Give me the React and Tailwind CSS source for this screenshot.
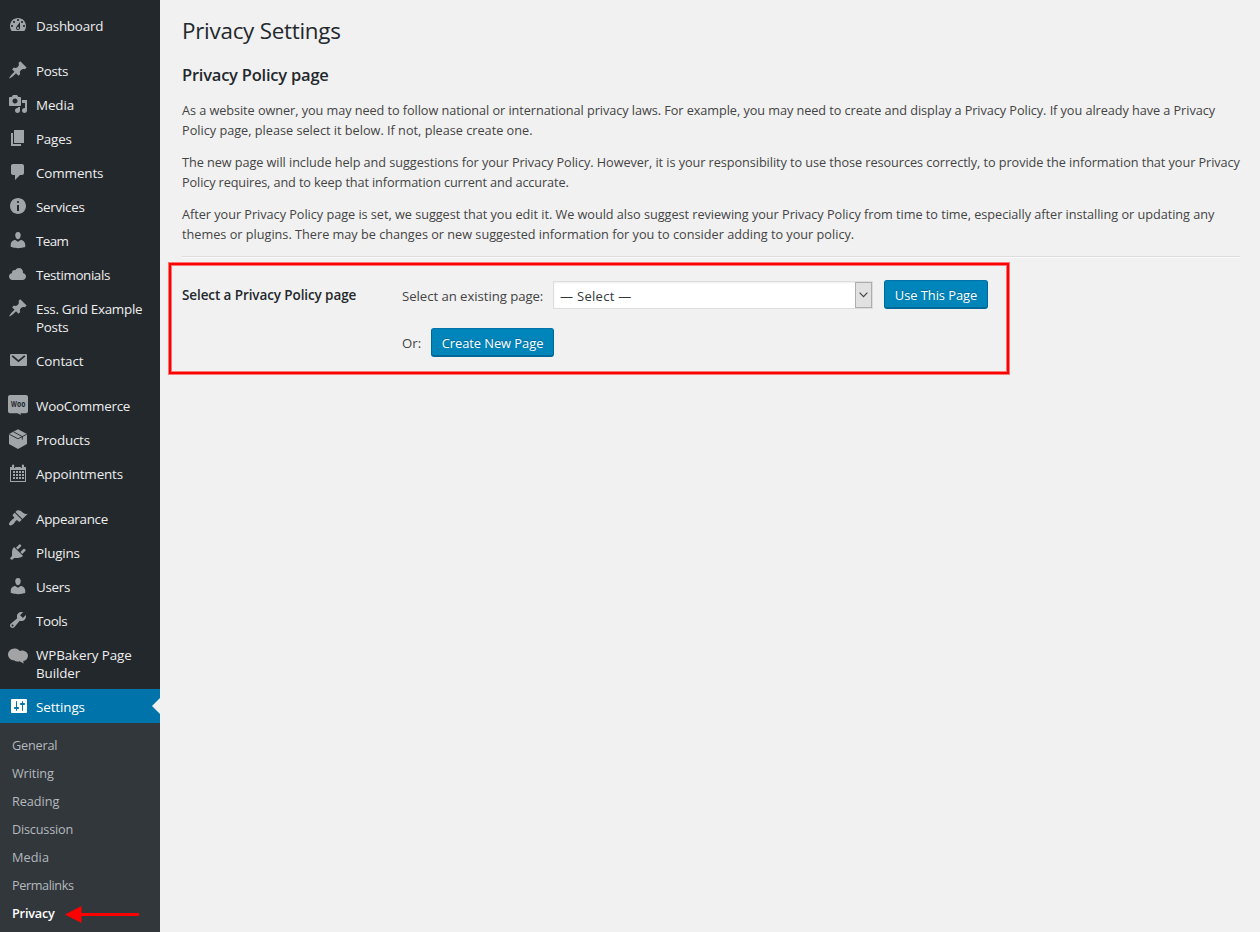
const PIN = "M10.44 3.02l1.82-1.82 6.36 6.35-1.83 1.82c-1.05-.68-2.48-.57-3.41.36l-.75.75c-.92.93-1.04 2.35-.35 3.41l-1.83 1.82-2.41-2.41-2.8 2.79c-.42.42-3.38 2.71-3.8 2.29s1.86-3.39 2.28-3.81l2.79-2.79L4.1 9.36l1.83-1.82c1.05.69 2.48.57 3.4-.36l.75-.75c.93-.92 1.05-2.35.36-3.41z";
const PERSON = "M10 9.25c-2.27 0-2.73-3.44-2.73-3.44C7 4.02 7.82 2 9.97 2c2.16 0 2.98 2.02 2.71 3.81 0 0-.41 3.44-2.68 3.44zm0 2.57L12.72 10c2.39 0 4.52 2.33 4.52 4.53v2.49s-3.65 1.13-7.24 1.13c-3.65 0-7.24-1.13-7.24-1.13v-2.49c0-2.25 1.94-4.48 4.47-4.48z";

const paths = {
  dashboard: "M3.76 16h12.48c1.1-1.37 1.76-3.11 1.76-5 0-4.42-3.58-8-8-8s-8 3.58-8 8c0 1.89.66 3.63 1.76 5zM10 4c.55 0 1 .45 1 1s-.45 1-1 1-1-.45-1-1 .45-1 1-1zM6 6c.55 0 1 .45 1 1s-.45 1-1 1-1-.45-1-1 .45-1 1-1zm8 0c.55 0 1 .45 1 1s-.45 1-1 1-1-.45-1-1 .45-1 1-1zm-5.37 5.55L12 7v6c0 1.1-.9 2-2 2s-2-.9-2-2c0-.57.24-1.08.63-1.45zM4 10c.55 0 1 .45 1 1s-.45 1-1 1-1-.45-1-1 .45-1 1-1zm12 0c.55 0 1 .45 1 1s-.45 1-1 1-1-.45-1-1 .45-1 1-1zm-5 3c0-.55-.45-1-1-1s-1 .45-1 1 .45 1 1 1 1-.45 1-1z",
  pin: PIN,
  media: "M13 11V4c0-.55-.45-1-1-1h-1.67L9 1H5L3.67 3H2c-.55 0-1 .45-1 1v7c0 .55.45 1 1 1h10c.55 0 1-.45 1-1zM7 4.5c1.38 0 2.5 1.12 2.5 2.5S8.38 9.5 7 9.5 4.5 8.38 4.5 7 5.62 4.5 7 4.5zM14 6h5v10.5c0 1.38-1.12 2.5-2.5 2.5S14 17.88 14 16.5s1.12-2.5 2.5-2.5c.17 0 .34.02.5.05V9h-3V6zm-4 8.05V13h2v3.5c0 1.38-1.12 2.5-2.5 2.5S7 17.88 7 16.5 8.12 14 9.5 14c.17 0 .34.02.5.05z",
  page: "M6 15V2h10v13H6zm-1 1h8v2H3V5h2v11z",
  comment: "M5 2h9c1.1 0 2 .9 2 2v7c0 1.1-.9 2-2 2h-2l-5 5v-5H5c-1.1 0-2-.9-2-2V4c0-1.1.9-2 2-2z",
  info: "M10 2c4.42 0 8 3.58 8 8s-3.58 8-8 8-8-3.58-8-8 3.58-8 8-8zm1 4c0-.55-.45-1-1-1s-1 .45-1 1 .45 1 1 1 1-.45 1-1zm0 9V9H9v6h2z",
  person: PERSON,
  cloud: "M14.9 9c1.8.2 3.1 1.7 3.1 3.5 0 1.9-1.6 3.5-3.5 3.5h-10C2.6 16 1 14.4 1 12.5 1 10.7 2.3 9.3 4.1 9 4 8.9 4 8.7 4 8.5 4 7.1 5.1 6 6.5 6c.3 0 .7.1.9.2C8.1 4.9 9.4 4 11 4c2.2 0 4 1.8 4 4 0 .4-.1.7-.1 1z",
  brush: "M14.48 11.06L7.41 3.99l1.5-1.5c.5-.56 2.3-.47 3.51.32 1.21.8 1.43 1.28 2.91 2.1 1.18.64 2.45 1.26 4.45.85zm-.71.71L6.7 4.7 4.93 6.47c-.39.39-.39 1.02 0 1.41l1.06 1.06c.39.39.39 1.03 0 1.42-.6.6-1.43 1.11-2.21 1.69-.35.26-.7.53-1.01.84C1.43 14.23.4 16.08 1.4 17.07c.99 1 2.84-.03 4.18-1.36.31-.31.58-.66.85-1.02.57-.78 1.08-1.61 1.69-2.21.39-.39 1.02-.39 1.41 0l1.06 1.06c.39.39 1.02.39 1.41 0z",
  plug: "M13.11 4.36L9.87 7.6 8 5.73l3.24-3.24c.35-.34 1.05-.2 1.56.32.52.51.66 1.21.31 1.55zm-8 1.77l.91-1.12 9.01 9.01-1.19.84c-.71.71-2.63 1.16-3.82 1.16H6.14L4.9 17.26c-.59.59-1.54.59-2.12 0-.59-.58-.59-1.53 0-2.12l1.24-1.24v-3.88c0-1.13.4-3.19 1.09-3.89zm7.26 3.97l3.24-3.24c.34-.35 1.04-.21 1.55.31.52.51.66 1.21.31 1.55l-3.24 3.25z",
  wrench: "M16.68 9.77c-1.34 1.34-3.3 1.67-4.95.99l-5.41 6.52c-.99.99-2.59.99-3.58 0s-.99-2.59 0-3.57l6.52-5.42c-.68-1.65-.35-3.61.99-4.95 1.28-1.28 3.12-1.62 4.72-1.06l-2.89 2.89 2.82 2.82 2.86-2.87c.53 1.58.18 3.39-1.08 4.65zM3.81 16.21c.4.39 1.04.39 1.43 0 .4-.4.4-1.04 0-1.43-.39-.4-1.03-.4-1.43 0-.39.39-.39 1.03 0 1.43z",
  settings: "M18 16V4c0-.55-.45-1-1-1H3c-.55 0-1 .45-1 1v12c0 .55.45 1 1 1h14c.55 0 1-.45 1-1zM8 11h1c.55 0 1 .45 1 1s-.45 1-1 1H8v1.5c0 .28-.22.5-.5.5s-.5-.22-.5-.5V13H6c-.55 0-1-.45-1-1s.45-1 1-1h1V5.5c0-.28.22-.5.5-.5s.5.22.5.5V11zm5-2h-1c-.55 0-1-.45-1-1s.45-1 1-1h1V5.5c0-.28.22-.5.5-.5s.5.22.5.5V7h1c.55 0 1 .45 1 1s-.45 1-1 1h-1v5.5c0 .28-.22.5-.5.5s-.5-.22-.5-.5V9z",
};

function Drawing({ name }) {
  if (name === "mail")
    return (
      <>
        <rect x="2" y="4" width="17" height="12" rx="1.2" />
        <path d="M4.2 5.8l6.3 5.4 6.3-5.4" fill="none" stroke="#23282d" strokeWidth="1.7" />
      </>
    );
  if (name === "woo")
    return (
      <>
        <path d="M2 0h16a2 2 0 0 1 2 2v14.200a2 2 0 0 1-2 2h-5.500l.5 1.800-3.500-1.800H2a2 2 0 0 1-2-2V2a2 2 0 0 1 2-2z" />
        <text x="3" y="11.700" fontSize="8" fontWeight="700" fill="#23282d" textLength="5.800" lengthAdjust="spacingAndGlyphs" className="font-['Open_Sans',sans-serif]">W</text>
        <text x="9" y="11.700" fontSize="9.200" fontWeight="700" fill="#23282d" textLength="8.400" lengthAdjust="spacingAndGlyphs" className="font-['Open_Sans',sans-serif]">oo</text>
      </>
    );
  if (name === "box")
    return (
      <>
        <path d="M10 .3l9 4.700v10.100L10 19.900l-9-4.800V5z" />
        <path d="M1.200 5.200L10 9.800l8.800-4.600M5.600 2.900l8.700 4.700v3" fill="none" stroke="#23282d" strokeWidth=".9" />
      </>
    );
  if (name === "calendar")
    return (
      <>
        <path fillRule="evenodd" d="M2 4h2V2.500a1.100 1.100 0 0 1 2.200 0V5h1V4h5.600v1h1V2.500a1.100 1.100 0 0 1 2.200 0V4h2v15H2zM3 7v11h14V7z" />
        <path d="M5 8h2v2H5zm3 0h2v2H8zm3 0h2v2h-2zm3 0h2v2h-2zM5 11h2v2H5zm3 0h2v2H8zm3 0h2v2h-2zm3 0h2v2h-2zM5 14h2v2H5zm3 0h2v2H8zm3 0h2v2h-2zm3 0h2v2h-2z" />
      </>
    );
  if (name === "bakery")
    return <path fill="#a2a3a4" transform="translate(0 1.900)" d="M6.500 2.600c2.300-.2 4.200.8 5.200 2.500 1-.6 2.500-.7 4-.3 2.500.6 4.300 2.500 4.300 5 0 2.600-1.900 4.900-4.700 5.200l.3 2.700-4-2.300c-.8.400-1.500.5-2.500.3-1.100-.1-1.900-.4-2.600-1.100C3 14.600 0 12 0 8.700c0-3.400 3-5.900 6.500-6.100z" />;
  return <path d={paths[name]} fillRule={name === "dashboard" ? "evenodd" : "nonzero"} />;
}

const groups = [
  [["dashboard", ["Dashboard"], "tracking-[-0.22px]"]],
  [
    ["pin", ["Posts"], "tracking-[-0.3px]"],
    ["media", ["Media"], "tracking-[-0.1px]"],
    ["page", ["Pages"], "tracking-[-0.2px]"],
    ["comment", ["Comments"], "tracking-[-0.1px]"],
    ["info", ["Services"], "tracking-[-0.27px]"],
    ["person", ["Team"], "tracking-[-0.6px]"],
    ["cloud", ["Testimonials"], "tracking-[-0.4px]"],
    ["pin", ["Ess. Grid Example", "Posts"], "tracking-[-0.27px]"],
    ["mail", ["Contact"], "tracking-[-0.1px]"],
  ],
  [
    ["woo", ["WooCommerce"], "tracking-[-0.23px]"],
    ["box", ["Products"], "tracking-[-0.22px]"],
    ["calendar", ["Appointments"], "tracking-[-0.13px]"],
  ],
  [
    ["brush", ["Appearance"], "tracking-[-0.3px]"],
    ["plug", ["Plugins"], "tracking-[-0.15px]"],
    ["person", ["Users"], "tracking-[-0.3px]"],
    ["wrench", ["Tools"], "tracking-[-0.4px]"],
    ["bakery", ["WPBakery Page", "Builder"], "tracking-[-0.1px]"],
  ],
];

function Icon({ name }) {
  return (
    <svg viewBox="0 0 20 20" fill="currentColor" className="h-5 w-5 shrink-0 overflow-visible">
      <Drawing name={name} />
    </svg>
  );
}

function MenuItem({ icon, lines, tracking }) {
  return (
    <a className="flex gap-2 pt-1.5 pb-2 pl-2 text-[#a0a5aa]">
      <Icon name={icon} />
      <span className={"-mb-px pt-0.5 text-[13.4px] leading-[18px] text-[#eeeeee] " + tracking}>
        {lines.map((l) => (
          <span key={l} className="block whitespace-nowrap">{l}</span>
        ))}
      </span>
    </a>
  );
}

const submenu = [
  ["General", "tracking-[-0.2px]"],
  ["Writing", "tracking-[-0.1px]"],
  ["Reading", "tracking-[-0.05px]"],
  ["Discussion", "tracking-[-0.2px]"],
  ["Media", "tracking-[0.1px]"],
  ["Permalinks", "tracking-[-0.4px]"],
];

function Sidebar() {
  return (
    <nav className="flex w-40 shrink-0 flex-col bg-[#23282d] pt-[9px]">
      {groups.map((g, i) => (
        <div key={i} className={i < 3 ? "mb-[11px] flex flex-col" : "flex flex-col"}>
          {g.map(([icon, lines, tracking], j) => (
            <div key={j} className={lines.length > 1 ? (icon === "bakery" ? "h-[51px]" : "h-[52px]") : "h-[34px]"}>
              <MenuItem icon={icon} lines={lines} tracking={tracking} />
            </div>
          ))}
        </div>
      ))}
      <div className="relative flex h-[34px] gap-[7px] bg-[#0073aa] pt-[7px] pl-[9px] text-white">
        <Icon name="settings" />
        <span className="pt-[2px] text-[13.4px] leading-[18px] tracking-[-0.1px]">Settings</span>
        <svg viewBox="0 0 8 16" className="absolute top-[9px] right-0 h-4 w-2"><path d="M8 0v16L0 8z" fill="#f1f1f1" /></svg>
      </div>
      <div className="flex grow flex-col bg-[#32373c] pt-2 pl-3 text-[12.7px] text-[#b4b9be]">
        {submenu.map(([t, tracking]) => (
          <a key={t} className={"h-7 leading-7 " + tracking}>{t}</a>
        ))}
        <a className="flex h-7 items-center gap-2.5 font-semibold tracking-[-0.2px] text-white">
          <span className="w-[43px] leading-7">Privacy</span>
          <svg viewBox="0 0 74 17" className="mt-[3px] h-[17px] w-[74px]" fill="#ff0000"><path d="M0 8.500L16.500 0v7H74v3H16.500v7z" /></svg>
        </a>
      </div>
    </nav>
  );
}

function PrimaryButton({ children, className }) {
  return (
    <button className={"h-[29px] rounded-[3px] border border-[#006799] border-t-[#0073aa] border-b-2 bg-[#0085ba] pt-px text-[12.9px] leading-[25px] tracking-[-0.05px] text-white [text-shadow:0_-1px_1px_#006799] " + className}>
      <span className="block pt-px leading-6">{children}</span>
    </button>
  );
}

const paragraphs = [
  [
    ["As a website owner, you may need to follow national or international privacy laws. For example, you may need to create and display a Privacy Policy. If you already have a Privacy", "tracking-[-0.056px]"],
    ["Policy page, please select it below. If not, please create one.", ""],
  ],
  [
    ["The new page will include help and suggestions for your Privacy Policy. However, it is your responsibility to use those resources correctly, to provide the information that your Privacy", "tracking-[-0.06px]"],
    ["Policy requires, and to keep that information current and accurate.", "tracking-[-0.113px]"],
  ],
  [
    ["After your Privacy Policy page is set, we suggest that you edit it. We would also suggest reviewing your Privacy Policy from time to time, especially after installing or updating any", "tracking-[-0.03px]"],
    ["themes or plugins. There may be changes or new suggested information for you to consider adding to your policy.", ""],
  ],
];

export default function App() {
  return (
    <div className="flex h-[932px] w-[1260px] overflow-hidden bg-[#f1f1f1] font-['Open_Sans',sans-serif] text-[#444444]">
      <Sidebar />
      <main className="flex grow flex-col pt-4 pr-5 pl-[22px]">
        <h1 className="h-[30px] text-[22.4px] leading-[30px] tracking-[-0.25px] text-[#23282d]">Privacy Settings</h1>
        <h2 className="mt-[17px] h-6 text-[16.5px] leading-6 font-semibold tracking-[-0.22px] text-[#23282d]">Privacy Policy page</h2>
        <div className="mt-[13px] flex flex-col gap-3 text-[12.7px] leading-5">
          {paragraphs.map((p, i) => (
            <p key={i}>
              {p.map(([t, tracking]) => (
                <span key={t} className={"block whitespace-nowrap " + tracking}>{t}</span>
              ))}
            </p>
          ))}
        </div>
        <hr className="mt-3 h-[2px] border-t border-b border-t-[#dddddd] border-b-[#fafafa]" />
        <section className="relative flex h-[117px] pt-[22px]">
          <div className="w-[220px] pt-[5px] text-[13.5px] leading-5 font-semibold tracking-[-0.1px] text-[#23282d]">Select a Privacy Policy page</div>
          <div className="flex flex-col gap-[19px]">
            <div className="flex h-[29px] items-center">
              <span className="w-[151px] pt-[3px] text-[13.2px] leading-5 tracking-[-0.06px] whitespace-nowrap">Select an existing page:</span>
              <div className="mt-px flex h-7 w-80 items-center border border-[#dddddd] bg-white text-[#32373c] shadow-[inset_0_1px_2px_rgba(0,0,0,0.07)]">
                <span className="grow pt-0.5 pl-[6px] text-[13px] leading-5 tracking-[0.3px]">— Select —</span>
                <span className="flex h-[26px] w-[17px] items-center justify-center border border-[#adadad] bg-[#e1e1e1]">
                  <svg viewBox="0 0 9 6" className="h-[6px] w-[9px]" fill="none" stroke="#444444" strokeWidth="1.2"><path d="M.6.7l3.900 3.900L8.400.7" /></svg>
                </span>
              </div>
              <PrimaryButton className="ml-[11px] w-[104px]">Use This Page</PrimaryButton>
            </div>
            <div className="flex h-[29px] items-center">
              <span className="w-[29px] pt-px text-[13.2px] leading-5">Or:</span>
              <PrimaryButton className="w-[123px]">Create New Page</PrimaryButton>
            </div>
          </div>
          <div className="pointer-events-none absolute top-1 -left-[14px] h-[113px] w-[842px] border border-[#f87878]">
            <div className="h-full w-full border-2 border-[#ff0000]">
              <div className="h-full w-full border border-[#f87878]" />
            </div>
          </div>
        </section>
      </main>
    </div>
  );
}
